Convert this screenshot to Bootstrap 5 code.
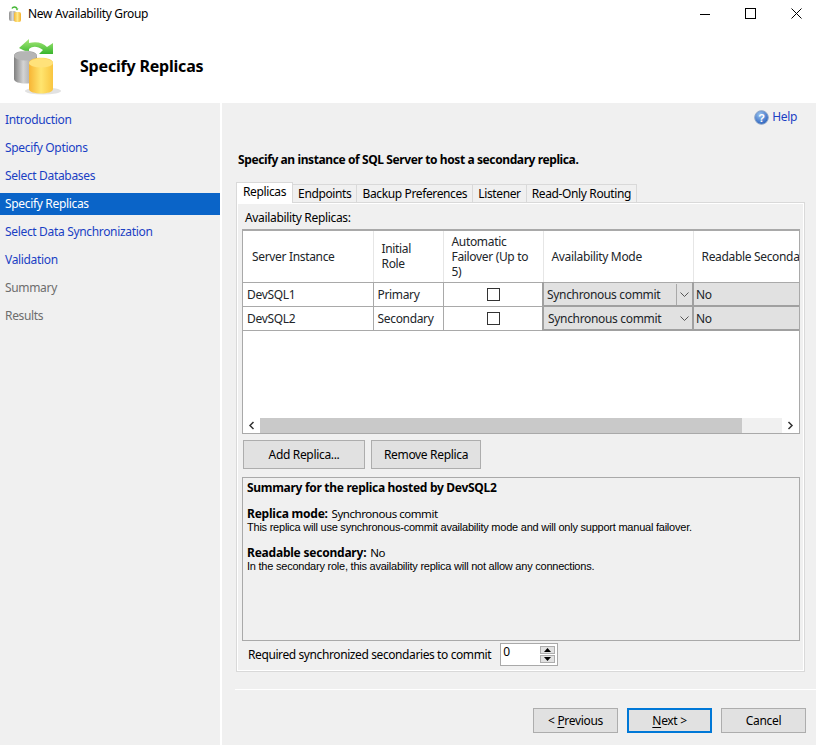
<!DOCTYPE html>
<html lang="en">
<head>
<meta charset="utf-8">
<title>New Availability Group</title>
<link href="https://cdn.jsdelivr.net/npm/bootstrap@5.3.0/dist/css/bootstrap.min.css" rel="stylesheet">
<style>
html,body{margin:0;width:816px;height:745px;overflow:hidden;background:#fff}
body{font-family:"Noto Sans",sans-serif;font-size:12px;line-height:16px;color:#000;letter-spacing:-.33px}
.titlebar{height:27px;padding-left:8px}
.titlebar .ttl{margin-left:4px}
.winbtns{margin-left:auto;gap:35px;padding-right:14px}
.headbar{height:76px}
.headicon{margin-left:9px;width:54px;height:60px}
.headtitle{margin:2px 0 0 17px;font-size:16px;font-weight:700;line-height:20px;letter-spacing:-.2px}
.shell{height:642px}
.sidebar{width:220px;background:#f0f0f0;padding-top:6px;flex:none}
.stepitem{display:block;height:22px;line-height:22px;margin-bottom:6px;padding:0 0 0 5px;color:#1a3fc4;text-decoration:none;border:0;background:none;border-radius:0}
.stepitem.active{background:#0a64c8;color:#fff}
.stepitem.muted{color:#6d6d6d}
.mainpane{margin-left:2px;width:594px;background:#f0f0f0;flex:none}
.helprow{height:26px;padding:2px 19px 0 0;color:#1a3fc4;gap:3px;align-items:center;justify-content:flex-end}
.lede{margin:21px 0 0 16px;height:20px;font-weight:700;line-height:20px;font-size:12px;letter-spacing:-.4px}
.tabsrow{margin:12px 0 0 14px;border:0;gap:0;height:20px;align-items:flex-end;flex-wrap:nowrap}
.tabsrow .nav-link{padding:0 5px;height:18px;line-height:17px;font-size:12px;letter-spacing:-.37px;color:#000;background:#f0f0f0;border:1px solid #d9d9d9;border-left:0;border-bottom:0;border-radius:0;margin:0}
.tabsrow .nav-link.active{height:21px;line-height:18px;background:#fff;border:1px solid #d9d9d9;border-bottom:0;margin-bottom:-1px;padding:0 6px;position:relative;z-index:1;color:#000}
.tabbody{margin-left:14px;width:569px;height:470px;border:1px solid #d9d9d9;box-shadow:inset 0 0 0 1px #fff;padding:6px 4px 0 5px;background:#f0f0f0}
.gridlabel{height:20px;line-height:18px;padding-left:3px}
.gridbox{width:558px;height:205px;border:1px solid #a9a9a9;border-top-width:2px;background:#fff;overflow:hidden;display:flex;flex-direction:column}
.gridscroll{height:186px;overflow:hidden;flex:none}
.repl{table-layout:fixed;width:640px;margin:0;border-collapse:collapse;--bs-table-bg:transparent}
.repl th,.repl td{font-weight:400;font-size:12px;line-height:15px;padding:0;border:0;border-right:1px solid #a9a9a9;border-bottom:1px solid #a9a9a9;vertical-align:middle;box-shadow:none}
.repl th{height:51px;padding-left:8px;border-right-color:#e6e6e6;border-bottom-color:#a9a9a9}
.repl th.firstcol{padding-left:9px}
.repl td{height:24px;padding:1px 0 0 4px}
.repl td.tickcell{padding:0 0 0 1px}
.repl td.grey{background:#e1e1e1;border:2px solid #a0a0a0;border-top-width:1px;padding:1px 0 0 2px}
.combo{display:flex;align-items:center;height:100%}
.combo .val{flex:1;padding-left:1px}
.combo .val.nudged{padding-left:2px}
.combo .drop{width:16px;align-self:stretch;display:flex;align-items:center;justify-content:center}
.combo .drop.sep{border-left:1px solid #a9a9a9}
.tick{display:block;width:13px;height:13px;border:1px solid #333;background:#fff;margin:0 auto;appearance:none;border-radius:0}
.hscroll{height:16px;background:#fff;display:flex;align-items:center}
.hscroll .arrowbtn{width:17px;flex:none;text-align:center;display:flex;justify-content:center}
.hscroll .track{flex:1;height:15px;background:#f0f0f0}
.hscroll .thumb{width:482px;height:15px;background:#c9c9c9}
.btnrow{gap:6px;margin-top:6px;padding-left:1px}
.winbtn{--bs-btn-border-radius:0;--bs-btn-font-size:12px;--bs-btn-line-height:16px;--bs-btn-padding-x:0;--bs-btn-padding-y:0;--bs-btn-bg:#e1e1e1;--bs-btn-border-color:#adadad;--bs-btn-color:#000;background:#e1e1e1;border:1px solid #adadad;color:#000;border-radius:0;font-size:12px;letter-spacing:-.33px}
.addb{width:122px;height:29px}
.remb{width:110px;height:29px}
.sumbox{margin-top:8px;width:558px;height:164px;border:1px solid #a9a9a9;padding:2px 4px;background:#f0f0f0;line-height:13px}
.sumbox h6{font-size:12px;font-weight:700;line-height:15px;margin:0 0 12px;letter-spacing:-.3px}
.sumbox p{margin:0 0 12px;font-family:"Liberation Sans",sans-serif;font-size:11px;line-height:13px;letter-spacing:-.23px}
.sumbox b{font-family:"Noto Sans",sans-serif;font-size:12px;letter-spacing:-.22px}
.sumbox .val{font-family:"Noto Sans",sans-serif;font-size:11.5px;letter-spacing:-.45px;margin-left:1px}
.reqrow{margin-top:0;height:27px;padding-left:6px;gap:10px}
.reqtext{letter-spacing:-.4px;padding-top:1px}
.spinner{width:58px;height:23px;border:1px solid #a9a9a9;background:#fff;display:flex;margin-left:-1px}
.spinner input{flex:1;min-width:0;border:0;outline:0;padding:0 0 6px 2px;font-size:12px;background:#fff;font-family:inherit;line-height:14px}
.spinstack{width:15px;margin:1px 2px 1px 0;display:flex;flex-direction:column;gap:1px;padding:1px 0}
.spinstack span{flex:1;background:#e1e1e1;border:1px solid #adadad;display:flex;align-items:center;justify-content:center}
.footline{margin:17px 0 0 13px;height:1px;background:#fff;border:0;opacity:1}
.footbtns{gap:9px;margin-top:18px;padding-right:10px;justify-content:flex-end}
.navbtn{width:85px;height:25px}
.winbtn.primaryb{border:2px solid #0078d7}
.winbtn u{text-underline-offset:2px}
</style>
</head>
<body>
<div class="titlebar d-flex align-items-center">
  <svg width="16" height="16" viewBox="0 0 16 16"><defs><linearGradient id="g1" x1="0" x2="1"><stop offset="0" stop-color="#8f8f8f"/><stop offset=".5" stop-color="#d8d8d8"/><stop offset="1" stop-color="#999"/></linearGradient><linearGradient id="y1" x1="0" x2="1"><stop offset="0" stop-color="#f4b632"/><stop offset=".5" stop-color="#ffe98a"/><stop offset="1" stop-color="#f3b02a"/></linearGradient></defs><path d="M4 2.500c1-2 4-2 5 0" fill="none" stroke="#3fb52f" stroke-width="1.500"/><path d="M7.500 2.500h3l-1.500 2z" fill="#3fb52f"/><rect x="1" y="5" width="7" height="10" rx="2" fill="url(#g1)"/><rect x="6" y="6" width="7" height="10" rx="2" fill="url(#y1)"/></svg>
  <span class="ttl">New Availability Group</span>
  <div class="winbtns d-flex align-items-center">
    <svg width="10" height="10" viewBox="0 0 10 10"><path d="M0 5.500h10" stroke="#000" stroke-width="1"/></svg>
    <svg width="11" height="11" viewBox="0 0 11 11"><rect x=".5" y=".5" width="10" height="10" fill="none" stroke="#000"/></svg>
    <svg width="11" height="11" viewBox="0 0 11 11"><path d="M.5.500l10 10M10.500.500l-10 10" stroke="#000" stroke-width="1" fill="none"/></svg>
  </div>
</div>
<div class="headbar d-flex align-items-center">
  <svg class="headicon" viewBox="0 0 54 60">
    <defs>
      <linearGradient id="gc" x1="0" x2="1"><stop offset="0" stop-color="#808080"/><stop offset=".4" stop-color="#d4d4d4"/><stop offset="1" stop-color="#8f8f8f"/></linearGradient>
      <linearGradient id="yc" x1="0" x2="1"><stop offset="0" stop-color="#f8b534"/><stop offset=".5" stop-color="#ffe56f"/><stop offset="1" stop-color="#f9c540"/></linearGradient>
      <linearGradient id="ar" x1="0" y1="0" x2="0" y2="1"><stop offset="0" stop-color="#a8ea7a"/><stop offset="1" stop-color="#39b52d"/></linearGradient>
    </defs>
    <ellipse cx="34" cy="56" rx="18" ry="3.500" fill="#e2e2e2"/>
    <path d="M10 13 20 4v4c8-2 14 0 18 4l6-4v11H30l4-4c-6-4-10-4-14-1v4z" fill="url(#ar)"/>
    <path d="M5 21c0-7 23-7 23 0v23c0 6-23 6-23 0z" fill="url(#gc)"/>
    <ellipse cx="16.500" cy="21" rx="11.500" ry="4.500" fill="#b5b5b5"/>
    <path d="M20 28c0-7 24-7 24 0v26c0 6-24 6-24 0z" fill="url(#yc)"/>
    <ellipse cx="32" cy="28" rx="12" ry="4.500" fill="#ffe27a"/>
  </svg>
  <h1 class="headtitle">Specify Replicas</h1>
</div>
<div class="shell d-flex">
  <nav class="sidebar nav flex-column">
    <a class="stepitem nav-link" href="#">Introduction</a>
    <a class="stepitem nav-link" href="#">Specify Options</a>
    <a class="stepitem nav-link" href="#">Select Databases</a>
    <a class="stepitem nav-link active" href="#">Specify Replicas</a>
    <a class="stepitem nav-link" href="#">Select Data Synchronization</a>
    <a class="stepitem nav-link" href="#">Validation</a>
    <a class="stepitem nav-link muted" href="#">Summary</a>
    <a class="stepitem nav-link muted" href="#">Results</a>
  </nav>
  <main class="mainpane">
    <div class="helprow d-flex">
      <svg width="15" height="15" viewBox="0 0 15 15"><defs><radialGradient id="hb" cx=".4" cy=".3" r=".8"><stop offset="0" stop-color="#9cc4f0"/><stop offset="1" stop-color="#1d56b8"/></radialGradient></defs><circle cx="7.500" cy="7.500" r="6.800" fill="url(#hb)" stroke="#8aa4c8"/><text x="7.500" y="11.500" text-anchor="middle" font-size="11" font-weight="700" fill="#fff" font-family="Liberation Sans, sans-serif">?</text></svg>
      <span>Help</span>
    </div>
    <div class="lede">Specify an instance of SQL Server to host a secondary replica.</div>
    <ul class="nav nav-tabs tabsrow">
      <li class="nav-item"><a class="nav-link active" href="#">Replicas</a></li>
      <li class="nav-item"><a class="nav-link" href="#">Endpoints</a></li>
      <li class="nav-item"><a class="nav-link" href="#">Backup Preferences</a></li>
      <li class="nav-item"><a class="nav-link" href="#">Listener</a></li>
      <li class="nav-item"><a class="nav-link" href="#">Read-Only Routing</a></li>
    </ul>
    <div class="tabbody">
      <div class="gridlabel">Availability Replicas:</div>
      <div class="gridbox">
        <div class="gridscroll">
          <table class="table repl">
            <colgroup><col style="width:130px"><col style="width:70px"><col style="width:100px"><col style="width:150px"><col style="width:190px"></colgroup>
            <thead><tr><th class="firstcol">Server Instance</th><th>Initial<br>Role</th><th>Automatic<br>Failover (Up to<br>5)</th><th>Availability Mode</th><th>Readable Secondary</th></tr></thead>
            <tbody>
              <tr><td>DevSQL1</td><td>Primary</td><td class="tickcell"><input class="tick" type="checkbox" aria-label="Automatic failover DevSQL1"></td><td class="grey"><div class="combo"><span class="val">Synchronous commit</span><span class="drop sep"><svg width="9" height="5" viewBox="0 0 9 5"><path d="M.5.500l4 4 4-4" fill="none" stroke="#555"/></svg></span></div></td><td class="grey">No</td></tr>
              <tr><td>DevSQL2</td><td>Secondary</td><td class="tickcell"><input class="tick" type="checkbox" aria-label="Automatic failover DevSQL2"></td><td class="grey"><div class="combo"><span class="val nudged">Synchronous commit</span><span class="drop"><svg width="9" height="5" viewBox="0 0 9 5"><path d="M.5.500l4 4 4-4" fill="none" stroke="#555"/></svg></span></div></td><td class="grey">No</td></tr>
            </tbody>
          </table>
        </div>
        <div class="hscroll">
          <span class="arrowbtn"><svg width="7" height="9" viewBox="0 0 7 9"><path d="M5.500 1l-3.500 3.500 3.500 3.500" fill="none" stroke="#333" stroke-width="1.500"/></svg></span>
          <div class="track"><div class="thumb"></div></div>
          <span class="arrowbtn"><svg width="7" height="9" viewBox="0 0 7 9"><path d="M1.500 1l3.500 3.500-3.500 3.500" fill="none" stroke="#333" stroke-width="1.500"/></svg></span>
        </div>
      </div>
      <div class="d-flex btnrow">
        <button class="btn winbtn addb" type="button">Add Replica...</button>
        <button class="btn winbtn remb" type="button">Remove Replica</button>
      </div>
      <div class="sumbox">
        <h6>Summary for the replica hosted by DevSQL2</h6>
        <p><b>Replica mode:</b> <span class="val">Synchronous commit</span><br>This replica will use synchronous-commit availability mode and will only support manual failover.</p>
        <p><b>Readable secondary:</b> <span class="val">No</span><br>In the secondary role, this availability replica will not allow any connections.</p>
      </div>
      <div class="d-flex align-items-center reqrow">
        <span class="reqtext">Required synchronized secondaries to commit</span>
        <div class="spinner">
          <input type="text" value="0" aria-label="Required synchronized secondaries">
          <div class="spinstack">
            <span><svg width="7" height="4" viewBox="0 0 7 4"><path d="M3.500 0l3.500 4h-7z" fill="#000"/></svg></span>
            <span><svg width="7" height="4" viewBox="0 0 7 4"><path d="M0 0h7l-3.500 4z" fill="#000"/></svg></span>
          </div>
        </div>
      </div>
    </div>
    <hr class="footline">
    <div class="d-flex footbtns">
      <button class="btn winbtn navbtn" type="button">&lt; <u>P</u>revious</button>
      <button class="btn winbtn navbtn primaryb" type="button"><u>N</u>ext &gt;</button>
      <button class="btn winbtn navbtn" type="button">Cancel</button>
    </div>
  </main>
</div>
<script src="https://cdn.jsdelivr.net/npm/bootstrap@5.3.0/dist/js/bootstrap.bundle.min.js"></script>
</body>
</html>
